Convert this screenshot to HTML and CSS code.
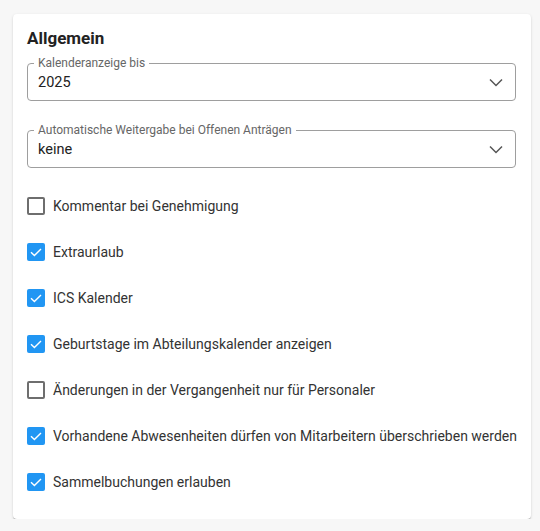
FILE: index.html
```html
<!DOCTYPE html>
<html lang="de">
<head>
<meta charset="utf-8">
<link rel="stylesheet" href="styles.css">
</head>
<body>
<div class="card">
  <h2 class="title">Allgemein</h2>
  <div class="select">
    <span class="select-label">Kalenderanzeige bis</span>
    <span class="select-value">2025</span>
    <svg class="chevron" width="14" height="9" viewBox="0 0 14 9"><path d="M1 1.5 L7 7.5 L13 1.5" fill="none" stroke="#555" stroke-width="1.5"/></svg>
  </div>
  <div class="select">
    <span class="select-label">Automatische Weitergabe bei Offenen Anträgen</span>
    <span class="select-value">keine</span>
    <svg class="chevron" width="14" height="9" viewBox="0 0 14 9"><path d="M1 1.5 L7 7.5 L13 1.5" fill="none" stroke="#555" stroke-width="1.5"/></svg>
  </div>
  <div class="checks">
    <label class="check"><span class="box"></span><span>Kommentar bei Genehmigung</span></label>
    <label class="check"><span class="box on"><svg width="18" height="18" viewBox="0 0 18 18"><path d="M4 9.2 L7.4 12.6 L14 6" fill="none" stroke="#fff" stroke-width="1.4"/></svg></span><span>Extraurlaub</span></label>
    <label class="check"><span class="box on"><svg width="18" height="18" viewBox="0 0 18 18"><path d="M4 9.2 L7.4 12.6 L14 6" fill="none" stroke="#fff" stroke-width="1.4"/></svg></span><span>ICS Kalender</span></label>
    <label class="check"><span class="box on"><svg width="18" height="18" viewBox="0 0 18 18"><path d="M4 9.2 L7.4 12.6 L14 6" fill="none" stroke="#fff" stroke-width="1.4"/></svg></span><span>Geburtstage im Abteilungskalender anzeigen</span></label>
    <label class="check"><span class="box"></span><span>Änderungen in der Vergangenheit nur für Personaler</span></label>
    <label class="check"><span class="box on"><svg width="18" height="18" viewBox="0 0 18 18"><path d="M4 9.2 L7.4 12.6 L14 6" fill="none" stroke="#fff" stroke-width="1.4"/></svg></span><span>Vorhandene Abwesenheiten dürfen von Mitarbeitern überschrieben werden</span></label>
    <label class="check"><span class="box on"><svg width="18" height="18" viewBox="0 0 18 18"><path d="M4 9.2 L7.4 12.6 L14 6" fill="none" stroke="#fff" stroke-width="1.4"/></svg></span><span>Sammelbuchungen erlauben</span></label>
  </div>
</div>
</body>
</html>
```
FILE: styles.css
```css
html, body {
  margin: 0;
  padding: 0;
  background: #f7f7f7;
  font-family: Roboto, "Liberation Sans", sans-serif;
  color: #222;
}
.card {
  margin: 14px 9px 0 13px;
  background: #fff;
  border-radius: 4px;
  box-shadow: 0 2px 1px -1px rgba(0,0,0,0.2), 0 1px 1px 0 rgba(0,0,0,0.14), 0 1px 3px 0 rgba(0,0,0,0.12);
  padding: 14px 15px 14px 14px;
}
.title {
  margin: 0 0 15px 0;
  font-size: 17px;
  line-height: 20px;
  font-weight: 700;
  color: #222;
}
.select {
  position: relative;
  height: 38px;
  box-sizing: border-box;
  border: 1px solid #9e9e9e;
  border-radius: 4px;
  display: flex;
  align-items: center;
  justify-content: space-between;
  padding: 0 12px 0 10px;
  margin-bottom: 29px;
}
.select + .select {
  margin-bottom: 15px;
}
.select-label {
  position: absolute;
  left: 6px;
  top: -8px;
  padding: 0 4px;
  background: #fff;
  font-size: 12px;
  line-height: 14px;
  color: #666;
}
.select-value {
  font-size: 14.5px;
  line-height: 18px;
  color: #222;
  padding-top: 1px;
}
.chevron {
  display: block;
}
.checks {
  display: flex;
  flex-direction: column;
}
.check {
  display: flex;
  align-items: center;
  gap: 8px;
  height: 46px;
  font-size: 14px;
  color: #333;
  white-space: nowrap;
}
.box {
  width: 18px;
  height: 18px;
  box-sizing: border-box;
  border: 2px solid #6e6e6e;
  border-radius: 2px;
  flex: none;
  display: block;
}
.box.on {
  border: none;
  background: #2196f3;
}
.box svg {
  display: block;
}
```
